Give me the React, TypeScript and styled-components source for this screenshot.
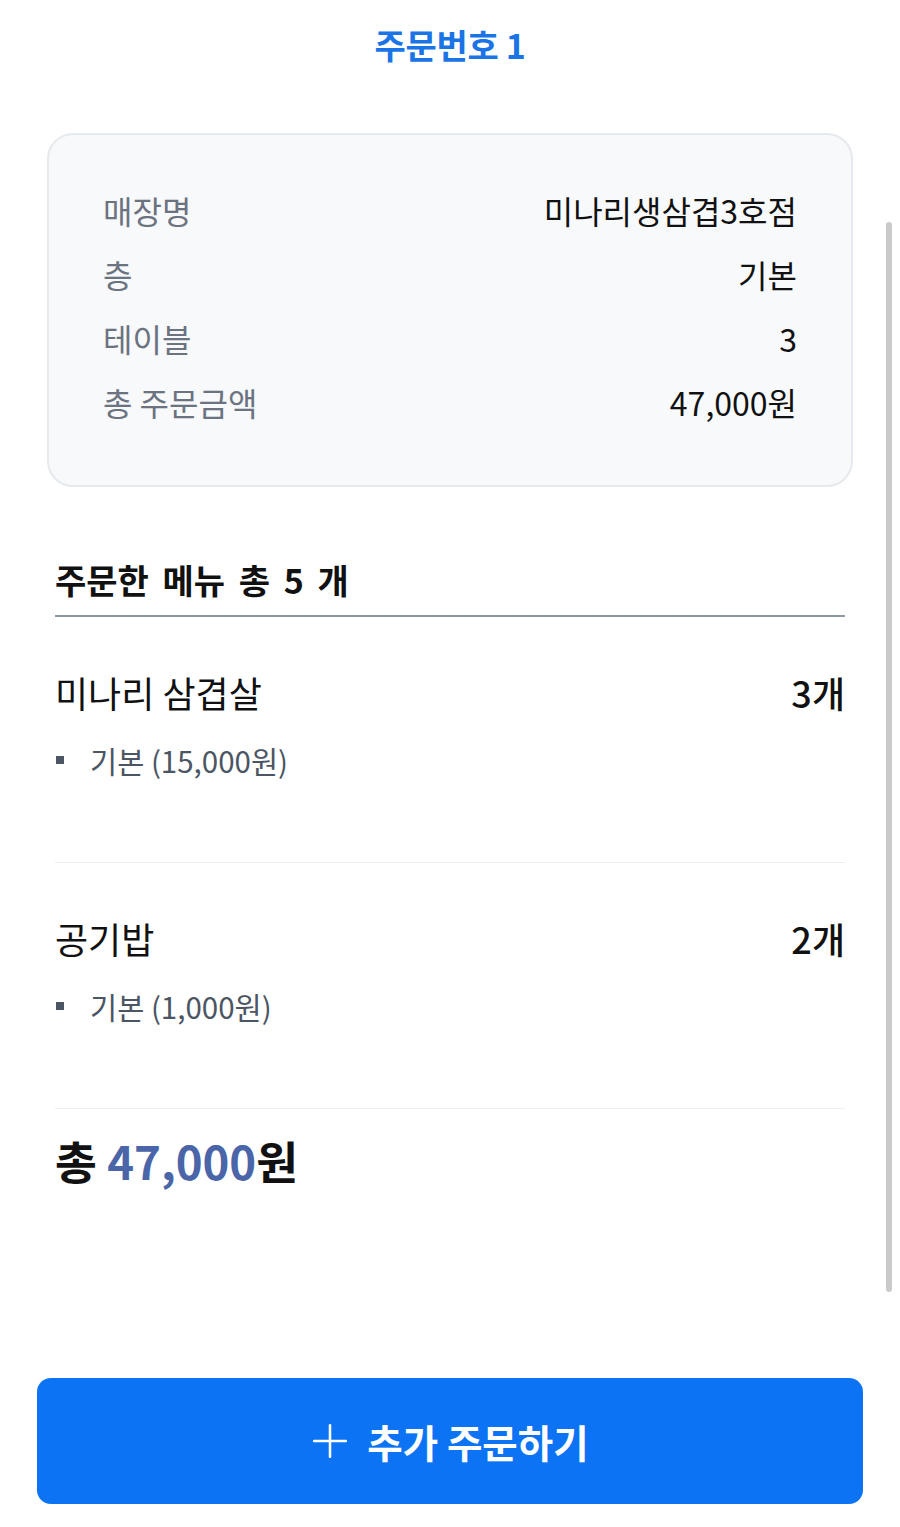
import React from "react";
import styled, { createGlobalStyle } from "styled-components";

const GlobalStyle = createGlobalStyle`
  html, body {
    margin: 0;
    padding: 0;
    background: #ffffff;
  }
  body {
    font-family: "Noto Sans CJK KR", "Noto Sans", sans-serif;
    color: #111111;
  }
  * {
    box-sizing: border-box;
  }
`;

const Page = styled.main`
  display: flex;
  flex-direction: column;
  min-height: 100vh;
  width: 100%;
`;

const Header = styled.header`
  display: flex;
  align-items: center;
  justify-content: center;
  height: 90px;

  h1 {
    margin: 0;
    font-size: 34px;
    font-weight: 700;
    color: #1a74e6;
    line-height: 1;
    letter-spacing: -0.3px;
  }
`;

const InfoCard = styled.section`
  display: flex;
  flex-direction: column;
  gap: 20px;
  margin: 43px 47px 0;
  padding: 53px 57px 61px;
  background: #f8f9fb;
  border: 2px solid #e6e9ee;
  border-radius: 26px;
`;

const InfoRow = styled.div`
  display: flex;
  justify-content: space-between;
  align-items: center;
  height: 44px;
  font-size: 32px;

  span.label {
    color: #6b7280;
    margin-left: -3px;
  }
  span.value {
    color: #111111;
    margin-right: -3px;
  }
`;

const MenuSection = styled.section`
  margin: 71px 55px 0;
`;

const SectionTitle = styled.h2`
  margin: 0;
  padding-bottom: 13px;
  border-bottom: 2px solid #8c97a3;
  font-size: 34px;
  font-weight: 700;
  line-height: 44px;
  word-spacing: 6px;
  color: #111111;
`;

const MenuItem = styled.div`
  display: flex;
  flex-direction: column;
  gap: 24px;
  padding: 51px 0 82px;
  border-bottom: 1px solid #eeeeee;
`;

const ItemHead = styled.div`
  display: flex;
  justify-content: space-between;
  align-items: center;
  height: 48px;
  font-size: 36px;

  span.name {
    font-weight: 400;
  }
  span.qty {
    font-weight: 500;
  }
`;

const OptionLine = styled.div`
  display: flex;
  align-items: center;
  gap: 26px;
  height: 40px;
  font-size: 29.5px;
  color: #4b5563;

  &::before {
    content: "";
    width: 8px;
    height: 8px;
    margin-left: 1px;
    background: #4b5563;
  }
`;

const Total = styled.div`
  margin-top: 23px;
  font-size: 45.5px;
  font-weight: 700;
  line-height: 56px;

  em {
    font-style: normal;
    color: #4a65a8;
  }
`;

const Footer = styled.div`
  margin-top: auto;
  padding: 0 37px 23px;
`;

const OrderButton = styled.button`
  display: flex;
  align-items: center;
  justify-content: center;
  gap: 18px;
  width: 100%;
  height: 126px;
  border: none;
  border-radius: 14px;
  background: #0c74f4;
  color: #ffffff;
  font-family: "Noto Sans CJK KR", "Noto Sans", sans-serif;
  font-size: 38.5px;
  font-weight: 700;
  cursor: pointer;

  svg {
    width: 38px;
    height: 38px;
  }
`;

const ScrollThumb = styled.div`
  position: fixed;
  top: 222px;
  right: 8px;
  width: 6px;
  height: 1070px;
  border-radius: 3px;
  background: #cacaca;
`;

const info = [
  { label: "매장명", value: "미나리생삼겹3호점" },
  { label: "층", value: "기본" },
  { label: "테이블", value: "3" },
  { label: "총 주문금액", value: "47,000원" },
];

const items = [
  { name: "미나리 삼겹살", qty: 3, option: "기본 (15,000원)" },
  { name: "공기밥", qty: 2, option: "기본 (1,000원)" },
];

const App: React.FC = () => {
  return (
    <>
      <GlobalStyle />
      <Page>
        <Header>
          <h1>주문번호 1</h1>
        </Header>

        <InfoCard>
          {info.map((row) => (
            <InfoRow key={row.label}>
              <span className="label">{row.label}</span>
              <span className="value">{row.value}</span>
            </InfoRow>
          ))}
        </InfoCard>

        <MenuSection>
          <SectionTitle>주문한 메뉴 총 5 개</SectionTitle>
          {items.map((item) => (
            <MenuItem key={item.name}>
              <ItemHead>
                <span className="name">{item.name}</span>
                <span className="qty">{item.qty}개</span>
              </ItemHead>
              <OptionLine>{item.option}</OptionLine>
            </MenuItem>
          ))}
          <Total>
            총 <em>47,000</em>원
          </Total>
        </MenuSection>

        <Footer>
          <OrderButton>
            <svg viewBox="0 0 24 24" fill="none" stroke="currentColor" strokeWidth="1.6" strokeLinecap="round">
              <path d="M12 2v20M2 12h20" />
            </svg>
            추가 주문하기
          </OrderButton>
        </Footer>
      </Page>
      <ScrollThumb />
    </>
  );
};

export default App;
